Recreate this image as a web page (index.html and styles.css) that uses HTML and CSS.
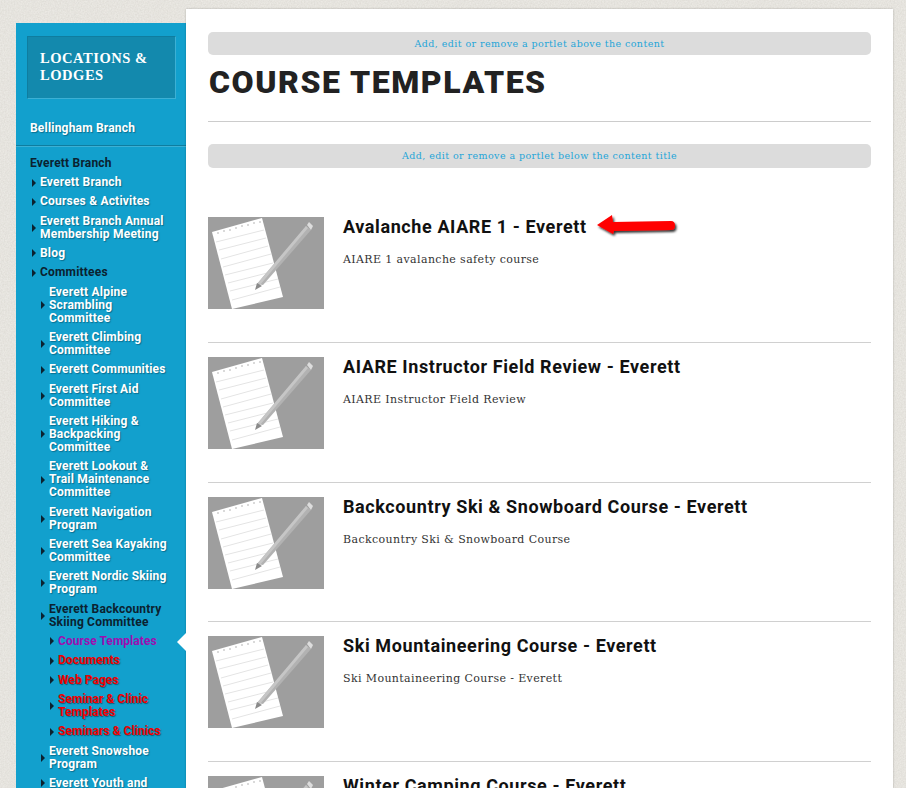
FILE: index.html
```html
<!DOCTYPE html>
<html lang="en">
<head>
<meta charset="utf-8">
<title>Course Templates</title>
<link rel="stylesheet" href="styles.css">
</head>
<body>
<svg class="defs" width="0" height="0" aria-hidden="true">
  <defs>
    <filter id="soft"><feGaussianBlur stdDeviation="0.75"/></filter>
    <symbol id="pad" viewBox="0 0 116 92">
      <rect width="116" height="92" fill="#9e9e9e"/>
      <g filter="url(#soft)">
        <polygon points="4,15 54,1 75,80 24,92" fill="#fff"/>
        <g stroke="#e4e4e4" stroke-width="1">
          <line x1="8" y1="25" x2="56" y2="13"/>
          <line x1="11" y1="33" x2="58" y2="21"/>
          <line x1="13" y1="42" x2="60" y2="29"/>
          <line x1="15" y1="50" x2="63" y2="37"/>
          <line x1="17" y1="58" x2="65" y2="46"/>
          <line x1="20" y1="66" x2="67" y2="54"/>
          <line x1="22" y1="74" x2="70" y2="62"/>
          <line x1="24" y1="83" x2="72" y2="70"/>
        </g>
        <g fill="#aaa">
          <circle cx="10" cy="16" r=".8"/><circle cx="16" cy="14" r=".8"/><circle cx="22" cy="13" r=".8"/><circle cx="28" cy="11" r=".8"/><circle cx="34" cy="9" r=".8"/><circle cx="40" cy="8" r=".8"/><circle cx="46" cy="6" r=".8"/><circle cx="52" cy="5" r=".8"/>
        </g>
        <polygon points="98,9 103,13 55,68 49,67" fill="#b2b2b2"/>
        <polygon points="98,9 100,11 52,68 49,67" fill="#c6c6c6"/>
        <polygon points="99,8 101,5 105,9 103,13" fill="#ddd"/>
        <polygon points="49,66 54,69 47,73" fill="#8a8a8a"/>
      </g>
    </symbol>
    <filter id="arrowShadow" x="-20%" y="-40%" width="140%" height="200%">
      <feDropShadow dx="1.5" dy="2" stdDeviation="1.2" flood-color="#000" flood-opacity=".8"/>
    </filter>
  </defs>
</svg>
<div class="page">
  <aside class="side">
    <div class="locbox">LOCATIONS &amp; LODGES</div>
    <a class="branch">Bellingham Branch</a>
    <div class="rule"></div>
    <div class="current">Everett Branch</div>
    <ul class="nav">
      <li>Everett Branch</li>
      <li>Courses &amp; Activites</li>
      <li>Everett Branch Annual Membership Meeting</li>
      <li>Blog</li>
      <li class="open">Committees</li>
      <li class="l2">Everett Alpine Scrambling Committee</li>
      <li class="l2">Everett Climbing Committee</li>
      <li class="l2">Everett Communities</li>
      <li class="l2">Everett First Aid Committee</li>
      <li class="l2">Everett Hiking &amp; Backpacking Committee</li>
      <li class="l2">Everett Lookout &amp; Trail Maintenance Committee</li>
      <li class="l2">Everett Navigation Program</li>
      <li class="l2">Everett Sea Kayaking Committee</li>
      <li class="l2">Everett Nordic Skiing Program</li>
      <li class="l2 open">Everett Backcountry Skiing Committee</li>
      <li class="l3 here">Course Templates</li>
      <li class="l3 red">Documents</li>
      <li class="l3 red">Web Pages</li>
      <li class="l3 red">Seminar &amp; Clinic Templates</li>
      <li class="l3 red">Seminars &amp; Clinics</li>
      <li class="l2">Everett Snowshoe Program</li>
      <li class="l2">Everett Youth and</li>
    </ul>
  </aside>
  <main class="main">
    <div class="portlet top">Add, edit or remove a portlet above the content</div>
    <h1>COURSE TEMPLATES</h1>
    <div class="hr"></div>
    <div class="portlet below">Add, edit or remove a portlet below the content title</div>
    <div class="list">
      <article class="item first">
        <svg class="thumb"><use href="#pad"/></svg>
        <div class="body">
          <h2>Avalanche AIARE 1 - Everett
            <svg class="arrow" width="88" height="32" viewBox="0 0 88 32"><path d="M4 15 L19 5 L20 12 L78 11 Q82 11 82 15.5 Q82 20 78 20 L21 21 L20 24 Z" fill="#f00" filter="url(#arrowShadow)"/></svg>
          </h2>
          <p>AIARE 1 avalanche safety course</p>
        </div>
      </article>
      <article class="item">
        <svg class="thumb"><use href="#pad"/></svg>
        <div class="body"><h2>AIARE Instructor Field Review - Everett</h2><p>AIARE Instructor Field Review</p></div>
      </article>
      <article class="item">
        <svg class="thumb"><use href="#pad"/></svg>
        <div class="body"><h2>Backcountry Ski &amp; Snowboard Course - Everett</h2><p>Backcountry Ski &amp; Snowboard Course</p></div>
      </article>
      <article class="item">
        <svg class="thumb"><use href="#pad"/></svg>
        <div class="body"><h2>Ski Mountaineering Course - Everett</h2><p>Ski Mountaineering Course - Everett</p></div>
      </article>
      <article class="item">
        <svg class="thumb"><use href="#pad"/></svg>
        <div class="body"><h2>Winter Camping Course - Everett</h2></div>
      </article>
    </div>
  </main>
</div>
</body>
</html>
```
FILE: styles.css
```css
* { box-sizing: border-box; }
html, body { margin: 0; height: 788px; overflow: hidden; }
body {
  background-color: #ebe9e4;
  background-image: url("data:image/svg+xml,%3Csvg xmlns='http://www.w3.org/2000/svg' width='300' height='300'%3E%3Cfilter id='n'%3E%3CfeTurbulence type='fractalNoise' baseFrequency='.7' numOctaves='2'/%3E%3CfeColorMatrix values='0 0 0 0 .45 0 0 0 0 .43 0 0 0 0 .38 0 0 0 .35 -.08'/%3E%3C/filter%3E%3Crect width='300' height='300' filter='url(%23n)'/%3E%3C/svg%3E");
  font-family: Roboto, "Liberation Sans", sans-serif;
}
.defs { position: absolute; }
.page { display: flex; align-items: flex-start; padding: 9px 0 0 16px; width: 906px; }

.side {
  width: 170px; margin-top: 14px; height: 900px; flex: none;
  background: #12a0cd; color: #fff;
  font-size: 12px; font-weight: 700; line-height: 13px; letter-spacing: .2px;
}
.locbox {
  margin: 13px 10px 0 11px; height: 63px; padding: 13px 12px 0 12px;
  background: #1389ad; border: 1px solid #0f7d9f; border-right-color: #3cb0d4; border-bottom-color: #3cb0d4;
  font-family: "Liberation Serif", serif; font-size: 14.5px; font-weight: 700; line-height: 17px; letter-spacing: .55px;
}
.branch { display: block; margin: 23px 0 0 14px; text-shadow: 1px 1px 1px #0a6f90; }
.rule { margin-top: 10px; height: 2px; background: #0f7d9f; border-bottom: 1px solid #3cb0d4; }
.current { margin: 10px 0 0 14px; color: #0b2230; }
.nav { list-style: none; margin: 6px 0 0; padding: 0; }
.nav li {
  position: relative; margin: 0 16px 6.33px 24px;
  text-shadow: 1px 1px 1px #0a6f90;
}
.nav li::before {
  content: ""; position: absolute; left: -8px; top: 50%; margin-top: -4px;
  border-left: 4px solid #0b2230; border-top: 4px solid transparent; border-bottom: 4px solid transparent;
}
.nav .l2 { margin-left: 33px; }
.nav .l3 { margin-left: 42px; letter-spacing: .05px; }
.nav .open { color: #0b2230; text-shadow: none; }
.nav .red { color: #f00000; text-shadow: 1px 1px 1px #0a5f7c; }
.nav .here { color: #9c0fb0; text-shadow: none; }
.nav .here::after {
  content: ""; position: absolute; right: -16px; top: -2px;
  border-right: 9px solid #fff; border-top: 9px solid transparent; border-bottom: 9px solid transparent;
}

.main {
  width: 707px; height: 900px; flex: none; background: #fff; padding: 23px 22px 0;
  box-shadow: 0 0 2px rgba(0,0,0,.25);
}
.portlet {
  background: #dcdcdc; border-radius: 5px; text-align: center; color: #1fa5d8;
  font-family: "DejaVu Serif", serif; font-size: 9.5px; letter-spacing: .43px;
}
.portlet.top { height: 23px; line-height: 23px; }
.portlet.below { height: 24px; line-height: 24px; margin-top: 22px; }
h1 {
  margin: 9px 0 0 1px; height: 46px; line-height: 36px; font-size: 32px; font-weight: 900; color: #222; letter-spacing: 1.55px;
}
.hr { height: 1px; background: #ccc; margin-top: 11px; }
.list { margin-top: 30px; }
.item { display: flex; gap: 19px; height: 139.5px; padding-top: 14px; border-top: 1px solid #d0d0d0; }
.item.first { border-top: 0; height: 144px; padding-top: 19px; }
.thumb { width: 116px; height: 92px; flex: none; }
.body { flex: 1; }
h2 {
  position: relative; margin: 0; font-size: 18px; font-weight: 700; line-height: 20px; color: #111; letter-spacing: .6px;
}
.arrow { position: absolute; left: 250px; top: -7px; }
p { margin: 16px 0 0; font-family: "DejaVu Serif", serif; font-size: 11px; line-height: 14px; color: #333; letter-spacing: .38px; }
```
